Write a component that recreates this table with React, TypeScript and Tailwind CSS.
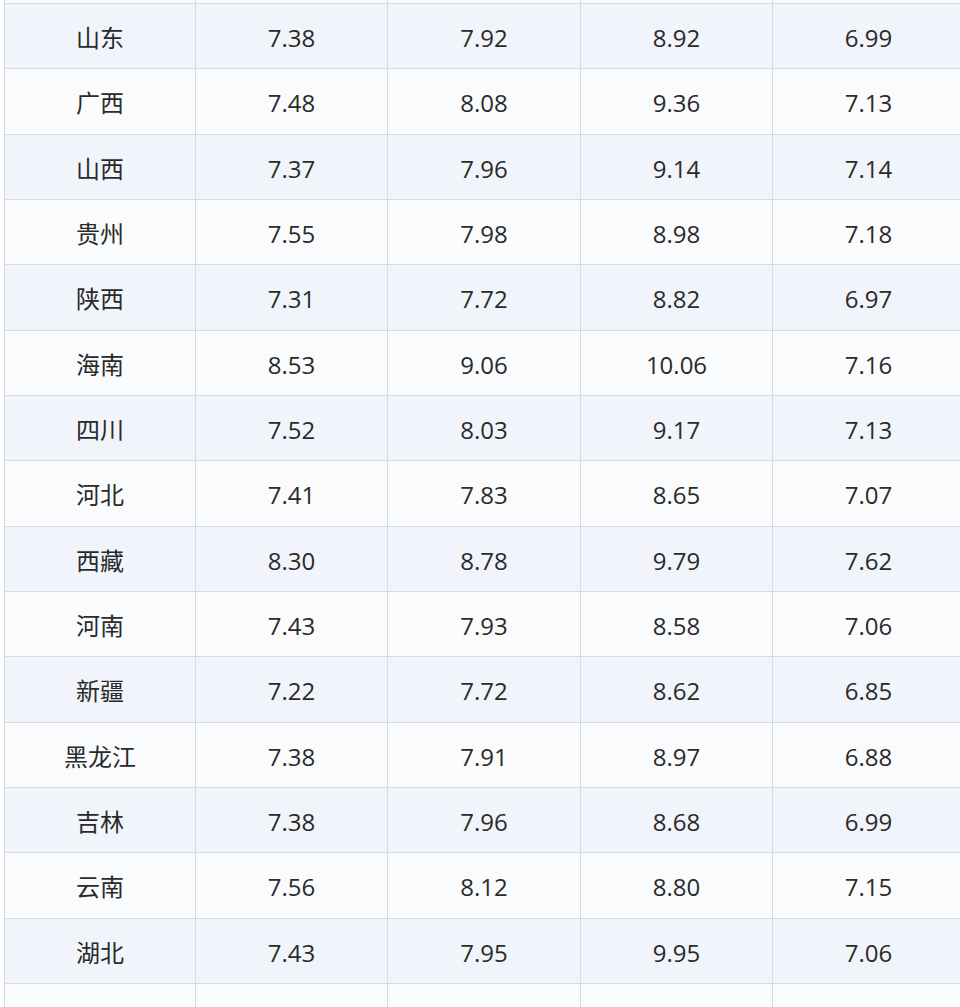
import React from "react";

const rows: [string, string, string, string, string][] = [
  ["山东", "7.38", "7.92", "8.92", "6.99"],
  ["广西", "7.48", "8.08", "9.36", "7.13"],
  ["山西", "7.37", "7.96", "9.14", "7.14"],
  ["贵州", "7.55", "7.98", "8.98", "7.18"],
  ["陕西", "7.31", "7.72", "8.82", "6.97"],
  ["海南", "8.53", "9.06", "10.06", "7.16"],
  ["四川", "7.52", "8.03", "9.17", "7.13"],
  ["河北", "7.41", "7.83", "8.65", "7.07"],
  ["西藏", "8.30", "8.78", "9.79", "7.62"],
  ["河南", "7.43", "7.93", "8.58", "7.06"],
  ["新疆", "7.22", "7.72", "8.62", "6.85"],
  ["黑龙江", "7.38", "7.91", "8.97", "6.88"],
  ["吉林", "7.38", "7.96", "8.68", "6.99"],
  ["云南", "7.56", "8.12", "8.80", "7.15"],
  ["湖北", "7.43", "7.95", "9.95", "7.06"],
];

function Row({ cells, shaded }: { cells: string[]; shaded: boolean }) {
  return (
    <div
      className={`grid grid-cols-[191px_192px_193px_192px_192px] h-[65.33px] border-b border-[#d6dbe1] ${
        shaded ? "bg-[#f1f5fb]" : "bg-[#f9fbfd]"
      }`}
    >
      {cells.map((c, i) => (
        <div
          key={i}
          className="flex items-center justify-center border-r border-[#d6dbe1] pt-[4px]"
        >
          {c}
        </div>
      ))}
    </div>
  );
}

export default function App() {
  return (
    <div className="w-[960px] h-[1007px] overflow-hidden bg-white">
      <div
        className="ml-[4px] -mt-[61.33px] border-l border-[#d6dbe1] w-[960px] text-[24px] text-[#2a2a2a]"
        style={{ fontFamily: '"Open Sans", "Noto Sans CJK SC", sans-serif' }}
      >
        <Row cells={["", "", "", "", ""]} shaded={false} />
        {rows.map((r, i) => (
          <Row key={i} cells={r} shaded={i % 2 === 0} />
        ))}
        <Row cells={["", "", "", "", ""]} shaded={false} />
      </div>
    </div>
  );
}
